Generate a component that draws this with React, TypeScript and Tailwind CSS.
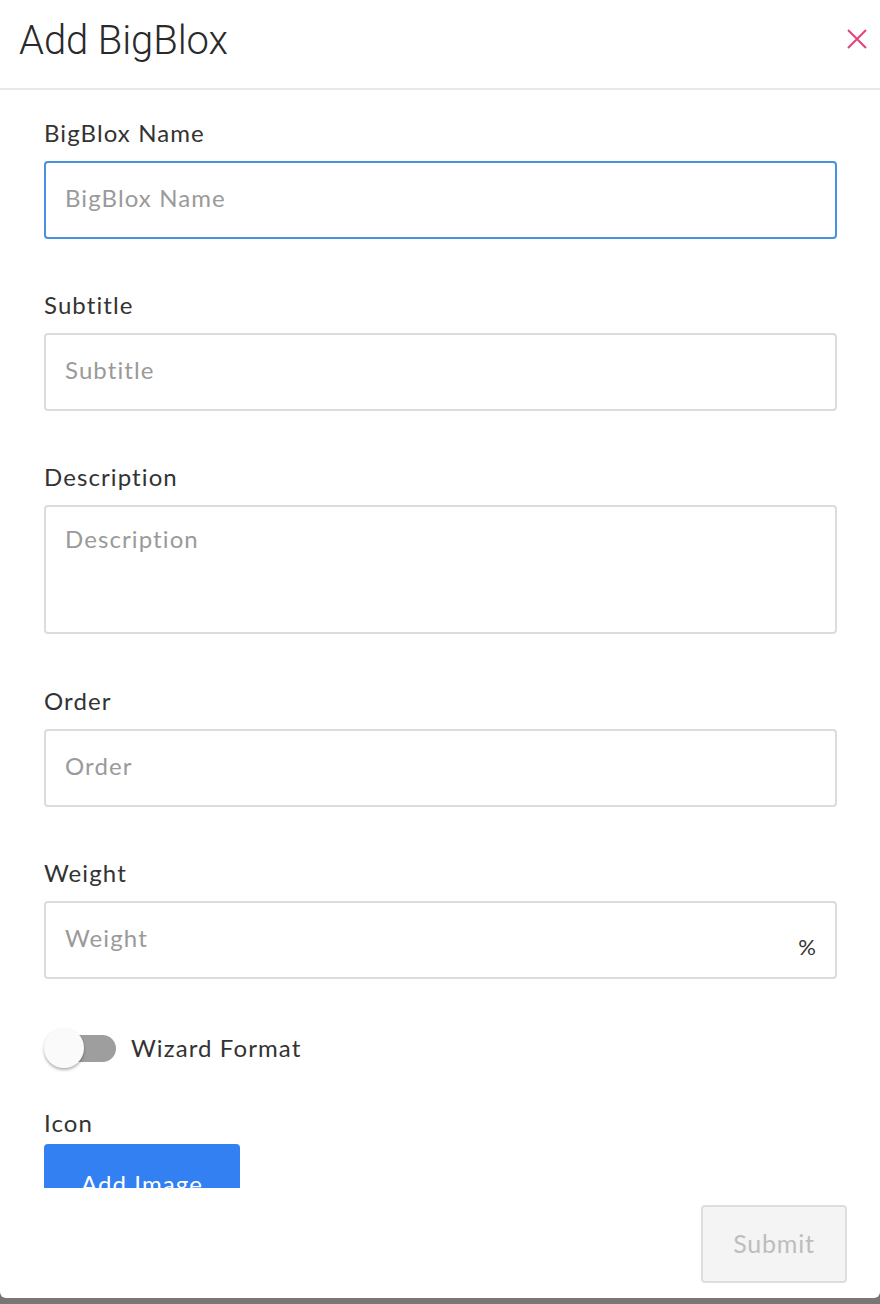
import React from "react";

const font = { fontFamily: "Lato, 'Open Sans', sans-serif" };

function Field({ label, placeholder, suffix, tall, focused }: { label: string; placeholder: string; suffix?: string; tall?: boolean; focused?: boolean }) {
  return (
    <div className="flex flex-col">
      <label className="text-[24px] leading-[28px] tracking-[1.1px] text-[#333] mb-[14px]">{label}</label>
      <div
        className={
          "relative w-full rounded-[4px] bg-white " +
          (focused ? "border-[#4a90e2] border-[2px]" : "border-[#dcdcdc] border-[2px]") +
          (tall ? " h-[129px]" : " h-[78px]")
        }
      >
        {tall ? (
          <textarea
            placeholder={placeholder}
            className="block w-full h-full resize-none outline-none bg-transparent px-[19px] pt-[17px] text-[24px] tracking-[1.1px] leading-[30px] text-[#333] placeholder:text-[#9a9a9a]"
            style={font}
          />
        ) : (
          <input
            placeholder={placeholder}
            className="block w-full h-full outline-none bg-transparent px-[19px] pb-[6px] text-[24px] tracking-[1.1px] text-[#333] placeholder:text-[#9a9a9a]"
            style={font}
          />
        )}
        {suffix && (
          <span className="absolute right-[19px] top-[30px] text-[22px] leading-[28px] text-[#333]">{suffix}</span>
        )}
      </div>
    </div>
  );
}

export default function App() {
  return (
    <div className="w-[880px] h-[1304px] bg-[#777] flex flex-col" style={font}>
      <div className="flex-1 bg-white flex flex-col overflow-hidden rounded-b-[6px]">
        <div className="h-[90px] shrink-0 border-b-[2px] border-[#e8e8e8] flex items-center justify-between pl-[19px] pr-[12px]">
          <h1 className="text-[40px] font-light text-[#2a2a2a] tracking-[-0.1px] pb-[6px]" style={{ fontFamily: "Roboto, 'Liberation Sans', sans-serif" }}>
            Add BigBlox
          </h1>
          <svg width="22" height="22" viewBox="0 0 22 22" className="mb-[10px]">
            <path d="M2 2 L20 20 M20 2 L2 20" stroke="#e0437a" strokeWidth="2" fill="none" />
          </svg>
        </div>
        <div className="h-[1098px] shrink-0 overflow-hidden pl-[44px] pr-[43px] pt-[29px]">
          <div className="flex flex-col">
            <div className="mb-[52px]"><Field label="BigBlox Name" placeholder="BigBlox Name" focused /></div>
            <div className="mb-[52px]"><Field label="Subtitle" placeholder="Subtitle" /></div>
            <div className="mb-[53px]"><Field label="Description" placeholder="Description" tall /></div>
            <div className="mb-[52px]"><Field label="Order" placeholder="Order" /></div>
            <div><Field label="Weight" placeholder="Weight" suffix="%" /></div>
            <div className="flex items-center mt-[49px] h-[40px]">
              <div className="relative w-[72px] h-[40px] flex items-center">
                <div className="absolute left-[8px] right-0 h-[27px] rounded-full bg-[#9e9e9e]" />
                <div className="absolute left-0 top-0 w-[40px] h-[40px] rounded-full bg-[#fafafa] shadow-[0_2px_3px_rgba(0,0,0,0.3)]" />
              </div>
              <span className="ml-[15px] text-[24px] tracking-[1.1px] text-[#333]">Wizard Format</span>
            </div>
            <div className="mt-[41px] text-[24px] leading-[28px] tracking-[1.1px] text-[#333]">Icon</div>
            <button className="mt-[7px] w-[196px] h-[64px] rounded-[4px] bg-[#3280f2] text-white text-[24px] tracking-[1.1px] pt-[16px]" style={font}>
              Add Image
            </button>
          </div>
        </div>
        <div className="flex-1 flex justify-end items-start pt-[17px] pr-[33px]">
          <button
            disabled
            className="w-[146px] h-[78px] rounded-[4px] border-[2px] border-[#dedede] bg-[#f4f4f4] text-[#bdbdbd] text-[25px] tracking-[0.8px]"
            style={font}
          >
            Submit
          </button>
        </div>
      </div>
      <div className="h-[6px] shrink-0" />
    </div>
  );
}
